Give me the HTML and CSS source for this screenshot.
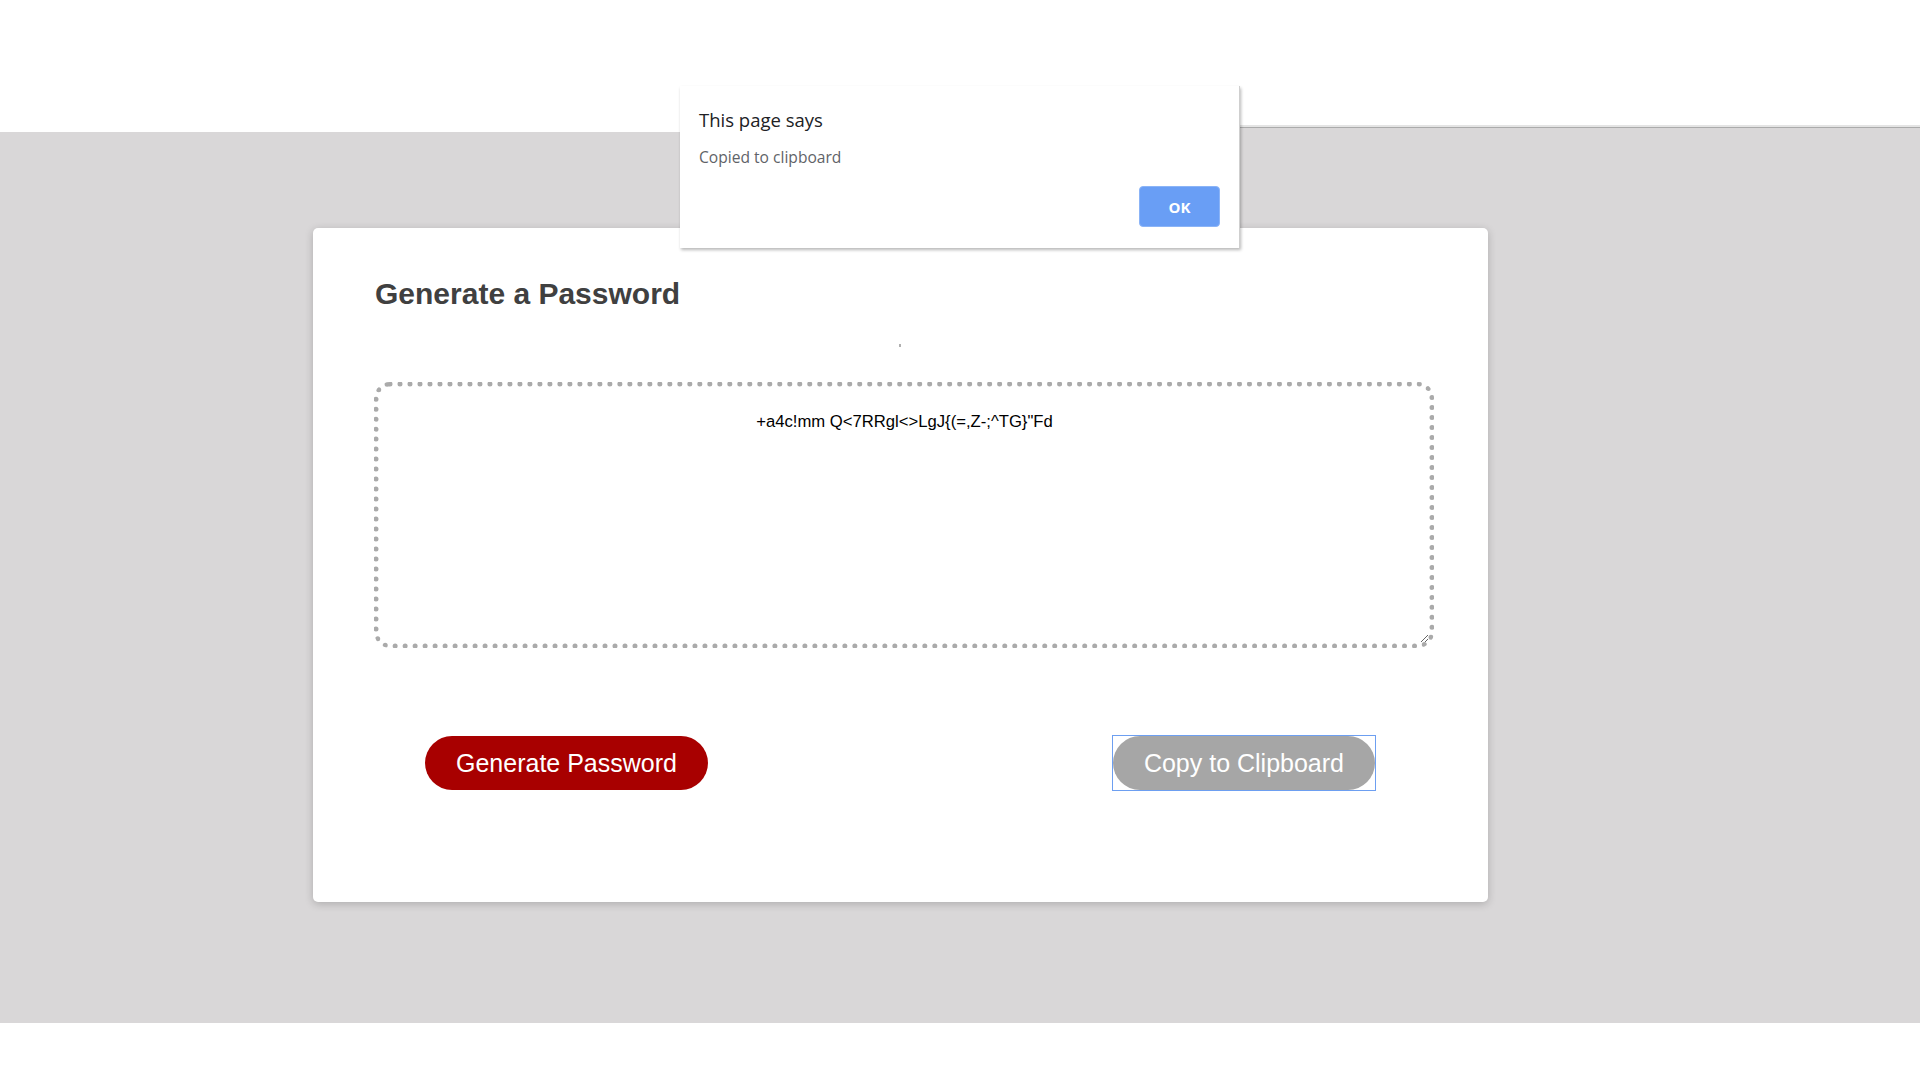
FILE: index.html
```html
<!DOCTYPE html>
<html lang="en">
<head>
<meta charset="UTF-8">
<title>Password Generator</title>
<link rel="stylesheet" href="styles.css">
</head>
<body>
<div class="topbar"></div>
<main class="main">
  <section class="card">
    <h2 class="card-title">Generate a Password</h2>
    <div class="mark"></div>
    <textarea class="password" readonly>+a4c!mm Q&lt;7RRgl&lt;&gt;LgJ{(=,Z-;^TG}"Fd</textarea>
    <div class="actions">
      <button class="btn btn-generate">Generate Password</button>
      <button class="btn btn-copy">Copy to Clipboard</button>
    </div>
  </section>
</main>
<div class="strip"></div>
<div class="dialog">
  <div class="dialog-title">This page says</div>
  <div class="dialog-msg">Copied to clipboard</div>
  <div class="dialog-actions"><button class="dialog-ok">OK</button></div>
</div>
</body>
</html>
```
FILE: styles.css
```css
* { box-sizing: border-box; }
html, body { margin: 0; padding: 0; }
body {
  background: #ffffff;
  font-family: "Liberation Sans", Arial, sans-serif;
  width: 1920px;
  height: 1080px;
  overflow: hidden;
  position: relative;
}
.topbar { height: 132px; background: #ffffff; }
.main {
  height: 891px;
  background: #d9d7d8;
  padding-top: 96px;
}
.card {
  margin-left: 313px;
  width: 1175px;
  height: 674px;
  background: #ffffff;
  border-radius: 5px;
  box-shadow: 0 2px 8px rgba(0, 0, 0, 0.2);
  padding: 49px 53px 0 62px;
}
.card-title {
  margin: 0;
  font-size: 30px;
  line-height: 34px;
  font-weight: bold;
  color: #404040;
}
.mark {
  width: 2px;
  height: 3px;
  background: #b0b0b0;
  margin: 33px 0 35px 524px;
}
.password {
  display: block;
  width: 1060px;
  height: 266px;
  margin-left: -1px;
  border: 5px dotted #aaaaaa;
  border-radius: 16px;
  padding: 25px 15px 15px 16px;
  font-family: "Liberation Sans", Arial, sans-serif;
  font-size: 16.67px;
  color: #000000;
  text-align: center;
  background: #ffffff;
  outline: none;
  resize: both;
  overflow: hidden;
}
.actions {
  display: flex;
  justify-content: space-between;
  margin-top: 88px;
  padding: 0 60px 0 50px;
}
.btn {
  height: 54px;
  border: none;
  border-radius: 27px;
  padding: 0 31px;
  font-family: "Liberation Sans", Arial, sans-serif;
  font-size: 25px;
  color: #ffffff;
  cursor: pointer;
}
.btn-generate { background: #a80000; }
.btn-copy {
  position: relative;
  background: #a6a6a6;
  outline: none;
}
.btn-copy::after {
  content: "";
  position: absolute;
  inset: -1px;
  border: 1px solid #6d9ff1;
}
.strip {
  position: absolute;
  left: 1240px;
  top: 125px;
  width: 680px;
  height: 7px;
  background: linear-gradient(#e4e4e4 0, #e4e4e4 2px, #ababab 2px, #ababab 3px, #d9d7d8 3px);
}
.dialog {
  position: absolute;
  left: 680px;
  top: 86px;
  width: 560px;
  height: 162px;
  background: #ffffff;
  border-right: 1px solid #cfcfcf;
  box-shadow: 1px 2px 3px rgba(0, 0, 0, 0.28);
  padding: 21px 19px 20px 19px;
  font-family: "Open Sans", "Noto Sans", sans-serif;
}
.dialog-title {
  font-size: 18.5px;
  line-height: 25px;
  color: #202124;
}
.dialog-msg {
  margin-top: 15px;
  font-size: 15.6px;
  line-height: 21px;
  color: #5f6368;
}
.dialog-actions {
  display: flex;
  justify-content: flex-end;
  margin-top: 18px;
}
.dialog-ok {
  width: 81px;
  height: 41px;
  background: #699ef5;
  border: 1px solid #8bb4f7;
  border-radius: 4px;
  color: #ffffff;
  font-family: "Open Sans", "Noto Sans", sans-serif;
  font-weight: bold;
  font-size: 15px;
  padding: 0;
}
```
